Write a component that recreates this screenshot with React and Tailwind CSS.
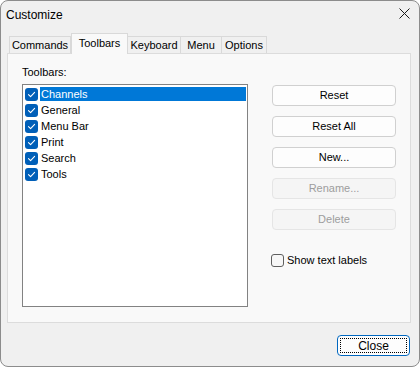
import React from "react";

function Check() {
  return (
    <span className="w-[13px] h-[13px] rounded-[3px] bg-[#005fb8] flex items-center justify-center shrink-0">
      <svg width="9" height="9" viewBox="0 0 9 9" fill="none">
        <path d="M1.5 4.6 L3.6 6.6 L7.6 2.4" stroke="white" strokeWidth="1.1" strokeLinecap="round" strokeLinejoin="round" />
      </svg>
    </span>
  );
}

const items = ["Channels", "General", "Menu Bar", "Print", "Search", "Tools"];

function Btn({ children, disabled }) {
  return (
    <div
      className={
        "w-[124px] h-[21px] rounded-[4px] border flex items-center justify-center " +
        (disabled
          ? "border-[#e5e5e5] bg-[#f5f5f5] text-[#9d9d9d]"
          : "border-[#d0d0d0] bg-[#fdfdfd] text-black")
      }
    >
      {children}
    </div>
  );
}

export default function App() {
  const tabs = ["Commands", "Toolbars", "Keyboard", "Menu", "Options"];
  const widths = ["w-[62px]", "w-[57px]", "w-[54px]", "w-[42px]", "w-[46px]"];
  return (
    <div
      className="w-[420px] h-[367px] bg-[#f0f0f0] border border-[#8c8c8c] rounded-[8px] flex flex-col text-[11px] text-black overflow-hidden"
      style={{ fontFamily: '"Liberation Sans", Arial, sans-serif' }}
    >
      <div className="h-[32px] flex items-start justify-between">
        <div className="pl-[5px] pt-[5px] text-[12px]">Customize</div>
        <div className="pr-[9px] pt-[7px]">
          <svg width="11" height="11" viewBox="0 0 11 11">
            <path d="M0.5 0.5 L10.5 10.5 M10.5 0.5 L0.5 10.5" stroke="#1a1a1a" strokeWidth="1" />
          </svg>
        </div>
      </div>
      <div className="h-[20px] flex items-end pl-[8px] relative z-10">
        {tabs.map((t, i) =>
          i === 1 ? (
            <div
              key={t}
              className={widths[i] + " h-[21px] -mb-px bg-[#f9f9f9] border border-b-0 border-[#d9d9d9] flex items-center justify-center pb-[2px]"}
            >
              {t}
            </div>
          ) : (
            <div
              key={t}
              className={widths[i] + " h-[17px] bg-[#f0f0f0] border border-b-0 border-[#d9d9d9] flex items-center justify-center " + (i === 0 ? "" : "-ml-px")}
            >
              {t}
            </div>
          )
        )}
      </div>
      <div className="ml-[6px] w-[404px] h-[270px] bg-[#f9f9f9] border border-[#dcdcdc] flex pl-[14px]">
        <div className="flex flex-col pt-[11px]">
          <div className="h-[14px] leading-[14px]">Toolbars:</div>
          <div className="mt-[5px] w-[226px] h-[223px] bg-white border border-[#828282] pt-[1px] pl-[2px] flex flex-col">
            {items.map((it, i) => (
              <div key={it} className="h-[16px] flex items-center">
                <Check />
                <span
                  className={
                    "ml-[2px] h-[14px] leading-[14px] pl-[1px] " +
                    (i === 0 ? "bg-[#0078d7] text-white flex-1 mr-[1px]" : "")
                  }
                >
                  {it}
                </span>
              </div>
            ))}
          </div>
        </div>
        <div className="ml-[24px] pt-[31px] flex flex-col gap-[10px]">
          <Btn>Reset</Btn>
          <Btn>Reset All</Btn>
          <Btn>New...</Btn>
          <Btn disabled>Rename...</Btn>
          <Btn disabled>Delete</Btn>
          <div className="mt-[12px] -ml-px flex items-center">
            <span className="w-[13px] h-[13px] rounded-[3px] border border-[#5f5f5f] bg-[#f7f7f7]" />
            <span className="ml-[3px]">Show text labels</span>
          </div>
        </div>
      </div>
      <div className="flex justify-end pr-[9px] pt-[12px]">
        <div className="w-[73px] h-[21px] rounded-[4px] border border-[#0067c0] bg-[#fdfdfd] p-[2px]">
          <div className="w-full h-full border border-dotted border-black flex items-center justify-center text-[12px]">
            Close
          </div>
        </div>
      </div>
    </div>
  );
}
